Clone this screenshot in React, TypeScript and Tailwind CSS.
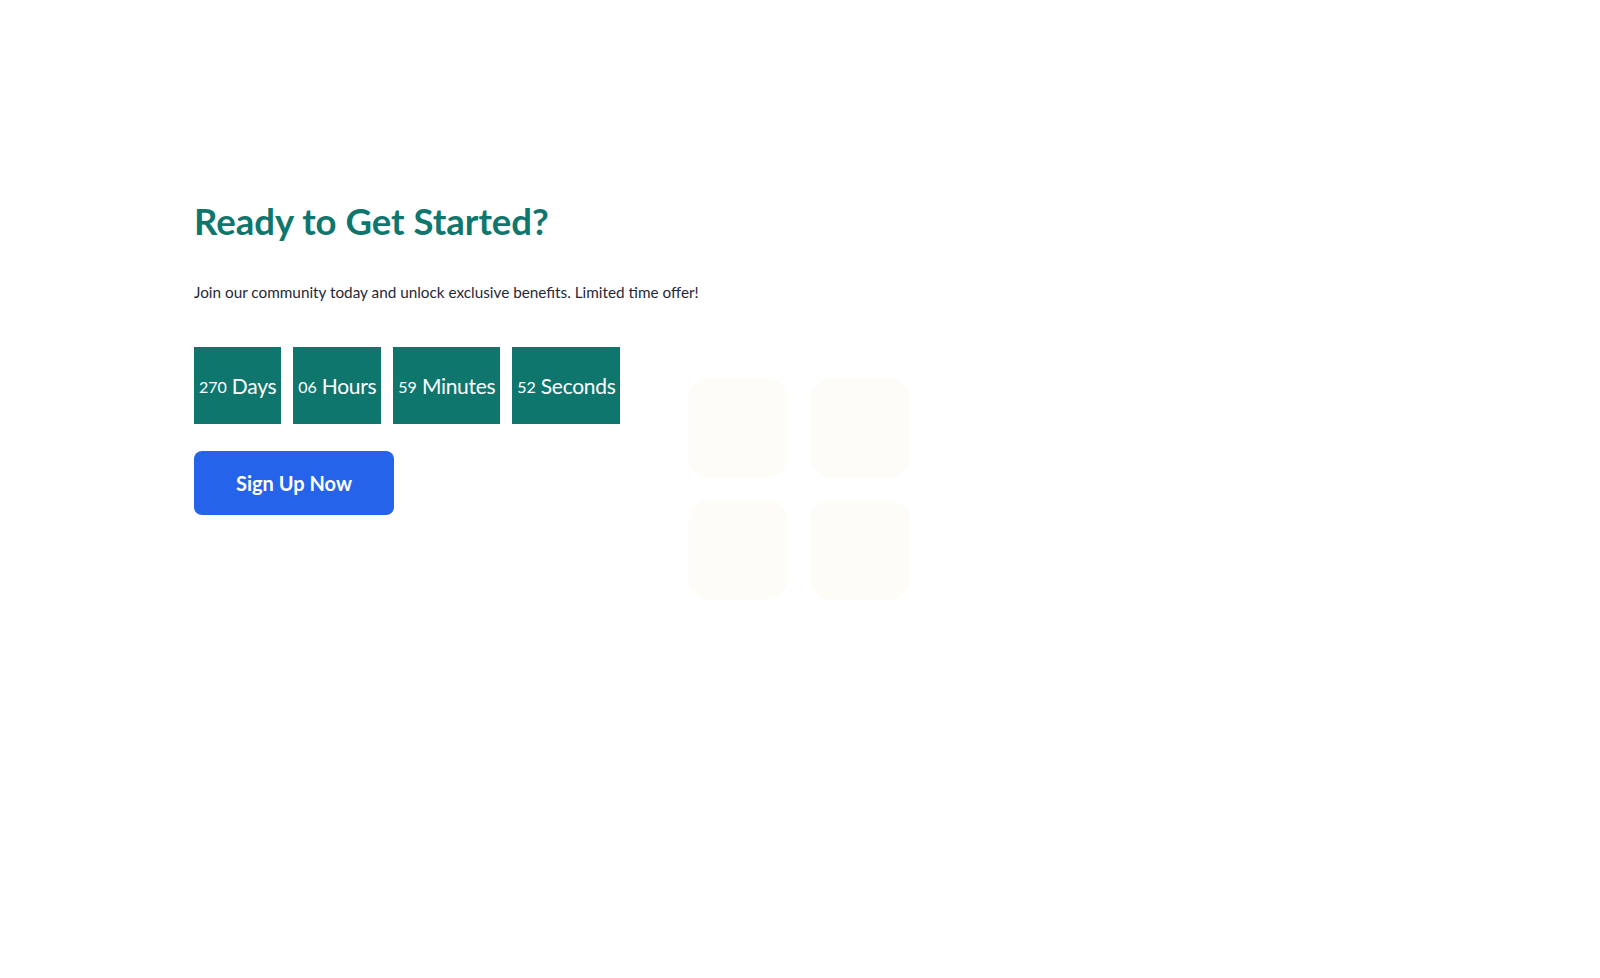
import React from 'react';

const units = [
  { value: '270', label: 'Days' },
  { value: '06', label: 'Hours' },
  { value: '59', label: 'Minutes' },
  { value: '52', label: 'Seconds' },
];

export default function App() {
  return (
    <div className="min-h-screen bg-white font-['Lato',sans-serif]">
      <div className="pt-[199px] pl-[194px]">
        <h1 className="text-[36.5px] font-bold leading-[44px] text-[#0f766e]">
          Ready to Get Started?
        </h1>
        <p className="mt-[38px] text-[15.3px] leading-[22px] text-[#1f2937]">
          Join our community today and unlock exclusive benefits. Limited time offer!
        </p>

        <div className="mt-[44px] flex items-start gap-[64px]">
          <div className="w-[430px]">
            <div className="flex gap-[12px]">
              {units.map((u) => (
                <div
                  key={u.label}
                  className="h-[77px] px-[5px] bg-[#0f766e] text-white flex items-center gap-[5px]"
                >
                  <span className="text-[16px] mt-[3px]">{u.value}</span>
                  <span className="text-[21px] tracking-[-0.3px]">{u.label}</span>
                </div>
              ))}
            </div>

            <button className="mt-[27px] w-[200px] h-[64px] rounded-lg bg-[#2563eb] text-white text-[20px] font-bold">
              Sign Up Now
            </button>
          </div>

          {/* faint grid mark */}
          <svg width="222" height="222" viewBox="0 0 222 222" className="mt-[31px] shrink-0">
            <rect x="0" y="0" width="100" height="100" rx="22" fill="#fdfcf6" />
            <rect x="122" y="0" width="100" height="100" rx="22" fill="#fdfcf6" />
            <rect x="0" y="122" width="100" height="100" rx="22" fill="#fdfcf6" />
            <rect x="122" y="122" width="100" height="100" rx="22" fill="#fdfcf6" />
          </svg>
        </div>
      </div>
    </div>
  );
}
